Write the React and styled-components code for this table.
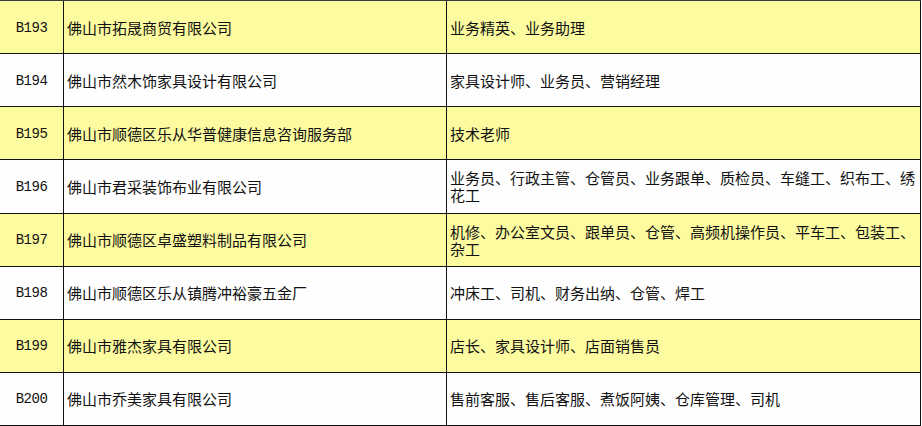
import styled, { createGlobalStyle } from 'styled-components';

const GlobalStyle = createGlobalStyle`
  html, body {
    margin: 0;
    padding: 0;
    background: #fff;
  }
  body {
    font-family: "Noto Sans CJK SC", "Liberation Sans", sans-serif;
    color: #111;
  }
`;

const rows = [
  { id: 'B193', company: '佛山市拓晟商贸有限公司', jobs: '业务精英、业务助理' },
  { id: 'B194', company: '佛山市然木饰家具设计有限公司', jobs: '家具设计师、业务员、营销经理' },
  { id: 'B195', company: '佛山市顺德区乐从华普健康信息咨询服务部', jobs: '技术老师' },
  {
    id: 'B196',
    company: '佛山市君采装饰布业有限公司',
    jobs: '业务员、行政主管、仓管员、业务跟单、质检员、车缝工、织布工、绣花工',
  },
  {
    id: 'B197',
    company: '佛山市顺德区卓盛塑料制品有限公司',
    jobs: '机修、办公室文员、跟单员、仓管、高频机操作员、平车工、包装工、杂工',
  },
  { id: 'B198', company: '佛山市顺德区乐从镇腾冲裕豪五金厂', jobs: '冲床工、司机、财务出纳、仓管、焊工' },
  { id: 'B199', company: '佛山市雅杰家具有限公司', jobs: '店长、家具设计师、店面销售员' },
  { id: 'B200', company: '佛山市乔美家具有限公司', jobs: '售前客服、售后客服、煮饭阿姨、仓库管理、司机' },
];

const App = () => {
  return (
    <>
      <GlobalStyle />
      <Table>
        {rows.map((row, i) => (
          <Row key={row.id} $highlight={i % 2 === 0}>
            <IdCell>{row.id}</IdCell>
            <TextCell>{row.company}</TextCell>
            <TextCell>{row.jobs}</TextCell>
          </Row>
        ))}
      </Table>
    </>
  );
};

export default App;

const Table = styled.div`
  width: 921px;
  height: 426px;
  display: grid;
  grid-template-rows: repeat(8, 1fr);
  border-top: 1px solid #3a3a3a;
  box-sizing: border-box;
`;

const Row = styled.div`
  display: grid;
  grid-template-columns: 64px 383px 474px;
  background: ${(p) => (p.$highlight ? '#fdfb9f' : '#fefefe')};
  border-bottom: 1px solid #111;
  min-height: 0;
`;

const Cell = styled.div`
  display: flex;
  align-items: center;
  border-right: 1px solid #111;
  min-width: 0;
  overflow: hidden;
`;

const IdCell = styled(Cell)`
  justify-content: center;
  font-family: "Liberation Mono", "DejaVu Sans Mono", monospace;
  font-size: 14px;
  letter-spacing: -0.5px;
  color: #111;
  padding-top: 1px;
`;

const TextCell = styled(Cell)`
  padding: 0 3px 0 3px;
  font-size: 15px;
  line-height: 17px;
  word-break: break-all;
`;
